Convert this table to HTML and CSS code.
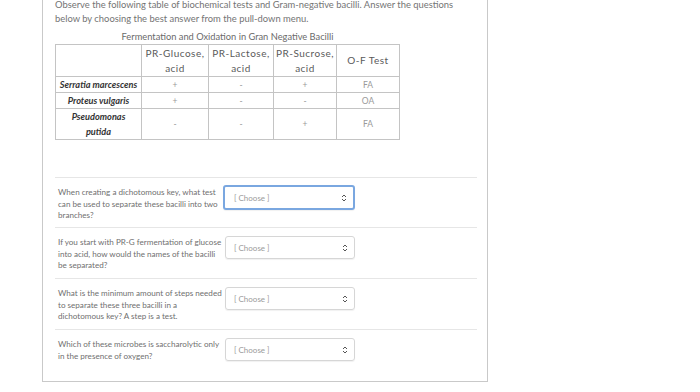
FILE: index.html
```html
<!DOCTYPE html>
<html lang="en">
<head>
<meta charset="utf-8">
<title>Quiz question</title>
<link rel="stylesheet" href="styles.css">
</head>
<body>
<div class="question">
  <p class="intro">Observe the following table of biochemical tests and Gram-negative bacilli. Answer the questions below by choosing the best answer from the pull-down menu.</p>

  <table class="data">
    <caption>Fermentation and Oxidation in Gran Negative Bacilli</caption>
    <thead>
      <tr>
        <th class="corner"></th>
        <th>PR-Glucose,<br>acid</th>
        <th>PR-Lactose,<br>acid</th>
        <th>PR-Sucrose,<br>acid</th>
        <th>O-F Test</th>
      </tr>
    </thead>
    <tbody>
      <tr>
        <th class="species">Serratia marcescens</th>
        <td>+</td><td>-</td><td>+</td><td>FA</td>
      </tr>
      <tr>
        <th class="species">Proteus vulgaris</th>
        <td>+</td><td>-</td><td>-</td><td>OA</td>
      </tr>
      <tr class="tall">
        <th class="species">Pseudomonas<br>putida</th>
        <td>-</td><td>-</td><td>+</td><td>FA</td>
      </tr>
    </tbody>
  </table>

  <div class="answers">
    <div class="answer">
      <p class="prompt">When creating a dichotomous key, what test can be used to separate these bacilli into two branches?</p>
      <div class="select focused"><span>[ Choose ]</span><svg class="arrows" viewBox="0 0 6 8" width="6" height="8"><path d="M1 3 L3 1 L5 3 M1 5 L3 7 L5 5" fill="none" stroke="#555" stroke-width="1"/></svg></div>
    </div>
    <div class="answer">
      <p class="prompt">If you start with PR-G fermentation of glucose into acid, how would the names of the bacilli be separated?</p>
      <div class="select"><span>[ Choose ]</span><svg class="arrows" viewBox="0 0 6 8" width="6" height="8"><path d="M1 3 L3 1 L5 3 M1 5 L3 7 L5 5" fill="none" stroke="#555" stroke-width="1"/></svg></div>
    </div>
    <div class="answer">
      <p class="prompt">What is the minimum amount of steps needed to separate these three bacilli in a dichotomous key? A step is a test.</p>
      <div class="select"><span>[ Choose ]</span><svg class="arrows" viewBox="0 0 6 8" width="6" height="8"><path d="M1 3 L3 1 L5 3 M1 5 L3 7 L5 5" fill="none" stroke="#555" stroke-width="1"/></svg></div>
    </div>
    <div class="answer">
      <p class="prompt">Which of these microbes is saccharolytic only in the presence of oxygen?</p>
      <div class="select"><span>[ Choose ]</span><svg class="arrows" viewBox="0 0 6 8" width="6" height="8"><path d="M1 3 L3 1 L5 3 M1 5 L3 7 L5 5" fill="none" stroke="#555" stroke-width="1"/></svg></div>
    </div>
  </div>
</div>
</body>
</html>
```

FILE: styles.css
```css
html, body {
  margin: 0;
  padding: 0;
  background: #fff;
}

body {
  font-family: Lato, "Open Sans", sans-serif;
  color: #555;
}

.question {
  box-sizing: border-box;
  width: 446px;
  margin-left: 42px;
  padding: 0 10px 0 12px;
  border: 1px solid #c9c9c9;
  border-top: none;
}

.intro {
  margin: -2px 0 0;
  font-size: 9.4px;
  line-height: 14px;
  color: #747474;
}

.data {
  margin-top: 5px;
  border-collapse: collapse;
  width: 345px;
  border: 1px solid #7d7d7d;
}

.data caption {
  font-size: 9.3px;
  line-height: 12px;
  color: #6a6a6a;
  padding-bottom: 1px;
}

.data th,
.data td {
  border: 1px solid #c4c4c4;
  padding: 0;
  text-align: center;
  font-weight: normal;
}

.data thead th {
  height: 31px;
  line-height: 15px;
  color: #5a5a5a;
  letter-spacing: 0.5px;
  font-size: 10px;
}

.data thead th.corner { width: 85px; }
.data thead th:nth-child(2) { width: 66px; }
.data thead th:nth-child(3) { width: 64px; }
.data thead th:nth-child(4) { width: 62px; }

.data tbody tr { height: 16px; }
.data tbody tr.tall { height: 31px; }

.data th.species {
  font-weight: bold;
  font-style: italic;
  font-size: 9.2px;
  line-height: 15px;
  color: #333;
}

.data td {
  font-size: 8.5px;
  color: #9a9a9a;
}

.answers {
  margin-top: 37px;
}

.answer {
  display: flex;
  align-items: flex-start;
  border-top: 1px solid #e6e6e6;
  height: 50px;
  padding-top: 8px;
  box-sizing: border-box;
}

.answer + .answer { height: 51px; }
.answer:last-child { height: 52px; }

.prompt {
  margin: 0;
  padding-left: 3px;
  padding-top: 1px;
  width: 167px;
  flex: none;
  font-size: 8.1px;
  line-height: 11.6px;
  color: #6f6f6f;
}

.select {
  box-sizing: border-box;
  display: flex;
  align-items: center;
  justify-content: space-between;
  width: 130px;
  height: 23px;
  margin-left: 0;
  padding: 0 6px 0 8px;
  border: 1px solid #d6d6d6;
  border-radius: 3px;
  box-shadow: 0 1px 1px rgba(0, 0, 0, 0.06);
  font-size: 8px;
  color: #9a9a9a;
}

.select.focused {
  width: 132px;
  height: 25px;
  margin-left: -2px;
  margin-top: -1px;
  padding-left: 9px;
  border: 2px solid #7aa7e0;
}

.arrows {
  display: block;
}
```
